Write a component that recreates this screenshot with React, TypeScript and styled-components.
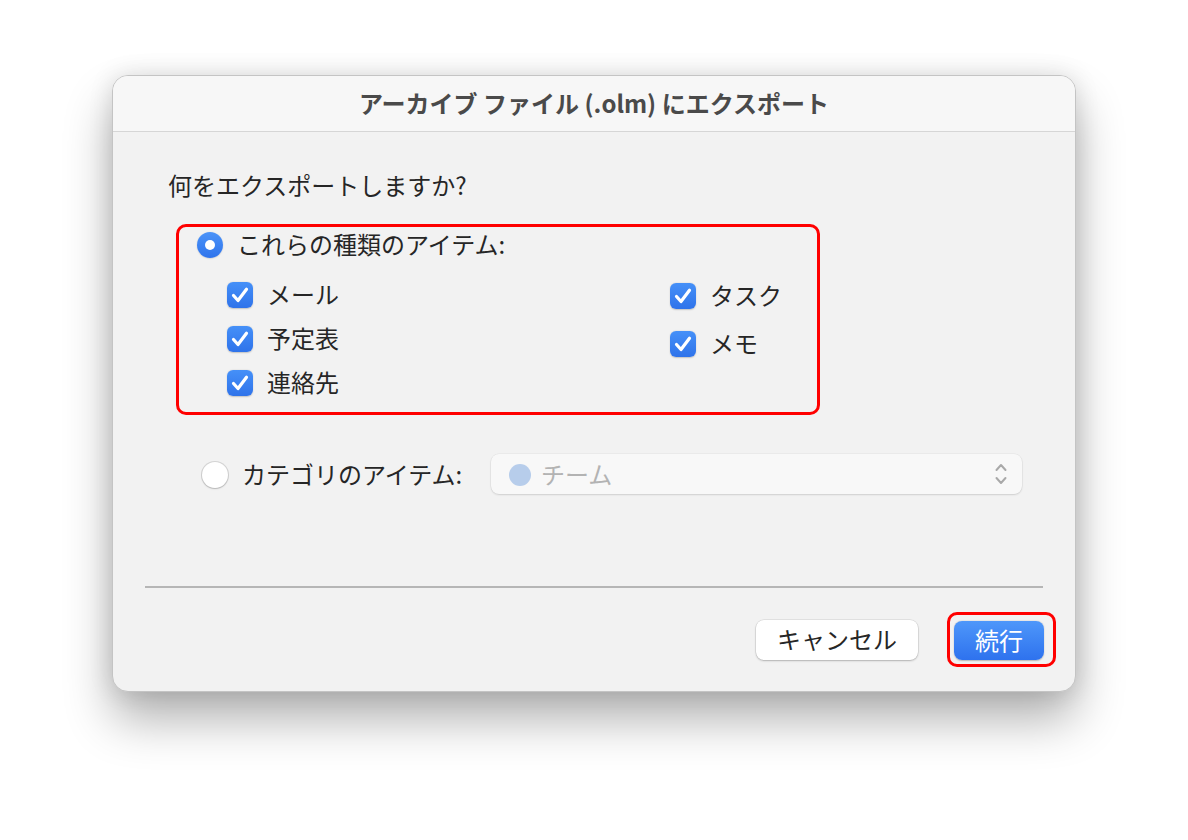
import React from "react";
import styled, { createGlobalStyle } from "styled-components";

const Global = createGlobalStyle`
  html, body { margin: 0; padding: 0; background: #ffffff; }
  body { font-family: "Noto Sans CJK JP", "Noto Sans", sans-serif; color: #262626; }
`;

const Stage = styled.div`
  width: 1188px;
  height: 840px;
  box-sizing: border-box;
  padding: 75px 0 0 112px;
  display: flex;
  align-items: flex-start;
`;

const Window = styled.div`
  width: 964px;
  height: 617px;
  box-sizing: border-box;
  border-radius: 16px;
  border: 1px solid #c4c4c4;
  background: #f2f2f2;
  overflow: hidden;
  display: flex;
  flex-direction: column;
  box-shadow: 0 28px 48px rgba(0, 0, 0, 0.3), 0 0 24px rgba(0, 0, 0, 0.12);
`;

const TitleBar = styled.div`
  height: 56px;
  flex: none;
  background: #f7f7f7;
  border-bottom: 1px solid #d6d6d6;
  display: flex;
  align-items: center;
  justify-content: center;
  font-size: 24px;
  line-height: 30px;
  padding-bottom: 2px;
  box-sizing: border-box;
  font-weight: 700;
  color: #4a4a4a;
`;

const Body = styled.div`
  flex: 1;
  display: flex;
  flex-direction: column;
  padding: 38px 0 0 55px;
`;

const Prompt = styled.div`
  font-size: 24px;
  line-height: 30px;
  height: 32px;
`;

const Highlight = styled.div`
  margin: 22px 0 0 8px;
  width: 644px;
  height: 191px;
  box-sizing: border-box;
  border: 3px solid #ff0000;
  border-radius: 10px;
  padding: 1px 0 0 18px;
`;

const OptionRow = styled.div`
  display: flex;
  align-items: center;
  gap: 14px;
  height: 32px;
  font-size: 24px;
  line-height: 30px;
`;

const Radio = styled.span<{ $on?: boolean }>`
  width: 26px;
  height: 26px;
  flex: none;
  border-radius: 50%;
  box-sizing: border-box;
  display: flex;
  align-items: center;
  justify-content: center;
  background: ${(p) => (p.$on ? "linear-gradient(#4b93f8, #2f74ec)" : "#ffffff")};
  box-shadow: ${(p) =>
    p.$on
      ? "0 0.5px 1.5px rgba(0,0,0,0.2)"
      : "0 0 0 1px rgba(0,0,0,0.12), 0 1px 2px rgba(0,0,0,0.15)"};
  margin-top: 2px;
  &::after {
    content: "";
    display: ${(p) => (p.$on ? "block" : "none")};
    width: 10px;
    height: 10px;
    border-radius: 50%;
    background: #ffffff;
  }
`;

const Columns = styled.div`
  display: flex;
  margin-top: 18px;
  padding-left: 30px;
`;

const Column = styled.div<{ $gap: number; $width?: number; $top?: number }>`
  display: flex;
  flex-direction: column;
  gap: ${(p) => p.$gap}px;
  width: ${(p) => (p.$width ? `${p.$width}px` : "auto")};
  margin-top: ${(p) => p.$top ?? 0}px;
`;

const CheckRow = styled.label`
  display: flex;
  align-items: center;
  gap: 14px;
  height: 32px;
  font-size: 24px;
  line-height: 30px;
`;

const Box = styled.span`
  width: 26px;
  height: 26px;
  flex: none;
  margin-top: 2px;
  border-radius: 6px;
  background: linear-gradient(#4590f8, #2f73ea);
  box-shadow: 0 0.5px 1.5px rgba(0, 0, 0, 0.2);
  display: flex;
  align-items: center;
  justify-content: center;
`;

const CategoryRow = styled.div`
  display: flex;
  align-items: center;
  margin: 39px 0 0 34px;
  height: 40px;
`;

const CategoryLabel = styled.div`
  display: flex;
  align-items: center;
  gap: 14px;
  font-size: 24px;
  line-height: 30px;
  width: 289px;
`;

const Select = styled.div`
  width: 531px;
  height: 40px;
  box-sizing: border-box;
  border-radius: 8px;
  background: #f8f8f8;
  box-shadow: 0 0 0 0.5px rgba(0, 0, 0, 0.06), 0 1px 2px rgba(0, 0, 0, 0.12);
  display: flex;
  align-items: center;
  padding: 0 14px 0 18px;
  gap: 10px;
  font-size: 24px;
  line-height: 30px;
  color: #b3b3b3;
`;

const Dot = styled.span`
  width: 22px;
  height: 22px;
  border-radius: 50%;
  background: #b7cdeb;
  flex: none;
  margin-top: 2px;
`;

const SelectText = styled.span`
  flex: 1;
`;

const Separator = styled.div`
  margin: 92px 0 0 -23px;
  width: 898px;
  height: 2px;
  background: #b6b6b6;
`;

const Footer = styled.div`
  display: flex;
  justify-content: flex-end;
  align-items: center;
  gap: 29px;
  margin-top: 24px;
  padding-right: 19px;
`;

const CancelButton = styled.button`
  width: 162px;
  height: 40px;
  border: none;
  border-radius: 8px;
  background: #ffffff;
  box-shadow: 0 0 0 0.5px rgba(0, 0, 0, 0.12), 0 1px 2px rgba(0, 0, 0, 0.22);
  font-family: inherit;
  font-size: 24px;
  line-height: 30px;
  color: #262626;
  padding: 0 0 2px;
`;

const DefaultFrame = styled.div`
  width: 109px;
  height: 55px;
  box-sizing: border-box;
  border: 3px solid #ff0000;
  border-radius: 10px;
  padding: 6px 0 0 4px;
`;

const PrimaryButton = styled.button`
  width: 90px;
  height: 39px;
  border: none;
  border-radius: 8px;
  background: linear-gradient(#4e97fa, #2e72ee);
  box-shadow: 0 0.5px 1.5px rgba(0, 0, 0, 0.25);
  font-family: inherit;
  font-size: 24px;
  line-height: 30px;
  color: #ffffff;
  padding: 0 0 2px;
`;

const Check = () => (
  <svg width="22" height="22" viewBox="0 0 22 22">
    <path
      d="M4.5 11.5 L9 16.5 L17.5 5.2"
      fill="none"
      stroke="#ffffff"
      strokeWidth="3.2"
      strokeLinecap="round"
      strokeLinejoin="round"
    />
  </svg>
);

const Chevrons = () => (
  <svg width="14" height="26" viewBox="0 0 14 26">
    <path d="M2.5 9 L7 4 L11.5 9" fill="none" stroke="#a9a9a9" strokeWidth="2" strokeLinecap="round" strokeLinejoin="round" />
    <path d="M2.5 17 L7 22 L11.5 17" fill="none" stroke="#a9a9a9" strokeWidth="2" strokeLinecap="round" strokeLinejoin="round" />
  </svg>
);

const CheckItem = ({ label }: { label: string }) => (
  <CheckRow>
    <Box>
      <Check />
    </Box>
    {label}
  </CheckRow>
);

export default function App() {
  return (
    <>
      <Global />
      <Stage>
        <Window>
          <TitleBar>アーカイブ ファイル (.olm) にエクスポート</TitleBar>
          <Body>
            <Prompt>何をエクスポートしますか?</Prompt>
            <Highlight>
              <OptionRow>
                <Radio $on />
                これらの種類のアイテム:
              </OptionRow>
              <Columns>
                <Column $gap={12} $width={443}>
                  <CheckItem label="メール" />
                  <CheckItem label="予定表" />
                  <CheckItem label="連絡先" />
                </Column>
                <Column $gap={16} $top={1}>
                  <CheckItem label="タスク" />
                  <CheckItem label="メモ" />
                </Column>
              </Columns>
            </Highlight>
            <CategoryRow>
              <CategoryLabel>
                <Radio />
                カテゴリのアイテム:
              </CategoryLabel>
              <Select>
                <Dot />
                <SelectText>チーム</SelectText>
                <Chevrons />
              </Select>
            </CategoryRow>
            <Separator />
            <Footer>
              <CancelButton>キャンセル</CancelButton>
              <DefaultFrame>
                <PrimaryButton>続行</PrimaryButton>
              </DefaultFrame>
            </Footer>
          </Body>
        </Window>
      </Stage>
    </>
  );
}
